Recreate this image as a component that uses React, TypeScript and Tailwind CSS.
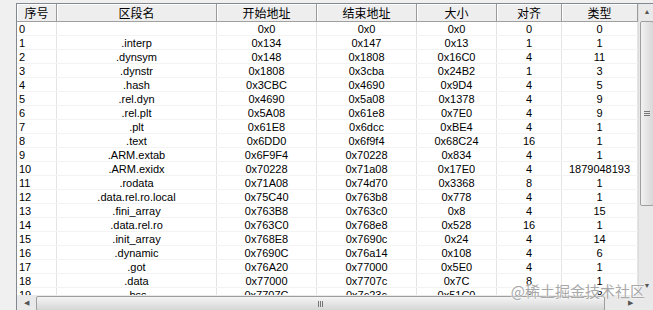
const cols = [
  { title: "序号", w: "w-[40px]", align: "text-left pl-[2px]" },
  { title: "区段名", w: "w-[160px]", align: "text-center" },
  { title: "开始地址", w: "w-[100px]", align: "text-center" },
  { title: "结束地址", w: "w-[100px]", align: "text-center" },
  { title: "大小", w: "w-[80px]", align: "text-center" },
  { title: "对齐", w: "w-[65px]", align: "text-center" },
  { title: "类型", w: "w-[76px]", align: "text-center" },
];

const rows = [
  ["0", "", "0x0", "0x0", "0x0", "0", "0"],
  ["1", ".interp", "0x134", "0x147", "0x13", "1", "1"],
  ["2", ".dynsym", "0x148", "0x1808", "0x16C0", "4", "11"],
  ["3", ".dynstr", "0x1808", "0x3cba", "0x24B2", "1", "3"],
  ["4", ".hash", "0x3CBC", "0x4690", "0x9D4", "4", "5"],
  ["5", ".rel.dyn", "0x4690", "0x5a08", "0x1378", "4", "9"],
  ["6", ".rel.plt", "0x5A08", "0x61e8", "0x7E0", "4", "9"],
  ["7", ".plt", "0x61E8", "0x6dcc", "0xBE4", "4", "1"],
  ["8", ".text", "0x6DD0", "0x6f9f4", "0x68C24", "16", "1"],
  ["9", ".ARM.extab", "0x6F9F4", "0x70228", "0x834", "4", "1"],
  ["10", ".ARM.exidx", "0x70228", "0x71a08", "0x17E0", "4", "1879048193"],
  ["11", ".rodata", "0x71A08", "0x74d70", "0x3368", "8", "1"],
  ["12", ".data.rel.ro.local", "0x75C40", "0x763b8", "0x778", "4", "1"],
  ["13", ".fini_array", "0x763B8", "0x763c0", "0x8", "4", "15"],
  ["14", ".data.rel.ro", "0x763C0", "0x768e8", "0x528", "16", "1"],
  ["15", ".init_array", "0x768E8", "0x7690c", "0x24", "4", "14"],
  ["16", ".dynamic", "0x7690C", "0x76a14", "0x108", "4", "6"],
  ["17", ".got", "0x76A20", "0x77000", "0x5E0", "4", "1"],
  ["18", ".data", "0x77000", "0x7707c", "0x7C", "8", "1"],
  ["19", ".bss", "0x7707C", "0x7c23c", "0x51C0", "8", "8"],
];

export default function App() {
  return (
    <div className="relative w-[653px] h-[310px] overflow-hidden bg-[#f0f0f0] pt-[3px] pl-[16px] font-['Liberation_Sans',sans-serif] text-[11px] text-black">
      {/* list view */}
      <div className="flex w-[640px] h-[292px] border-l border-t border-[#828790] bg-white">
        <div className="flex flex-col w-[621px] overflow-hidden">
          {/* header */}
          <div className="flex h-[18px] shrink-0 bg-[#eeeeee] border-b border-[#a0a0a0]">
            {cols.map((c) => (
              <div
                key={c.title}
                className={`${c.w} shrink-0 flex items-center justify-center border-r border-[#9a9a9a] shadow-[inset_1px_1px_0_#ffffff] font-['Noto_Sans_CJK_SC',sans-serif] text-[12px] leading-[16px]`}
              >
                {c.title}
              </div>
            ))}
          </div>

          {/* rows */}
          {rows.map((r) => (
            <div key={r[0]} className="flex h-[14px] shrink-0 border-b border-[#f3f3f3]">
              {r.map((v, i) => (
                <div
                  key={i}
                  className={`${cols[i].w} ${cols[i].align} shrink-0 leading-[15px] whitespace-nowrap overflow-hidden border-r border-[#e4e4e4]`}
                >
                  {v}
                </div>
              ))}
            </div>
          ))}
        </div>

        {/* vertical scrollbar */}
        <div className="flex flex-col w-[17px] shrink-0 bg-[#e9e9e9] border-l border-[#dcdcdc]">
          <div className="h-[17px] flex items-center justify-center text-[7px] text-[#555]">▲</div>
          <div className="mx-[1px] h-[185px] rounded-[2px] border border-[#9e9e9e] bg-gradient-to-r from-[#f2f2f2] to-[#d8d8d8] flex items-center justify-center">
            <div className="flex flex-col gap-[1px]">
              <div className="w-[6px] h-[1px] bg-[#777]" />
              <div className="w-[6px] h-[1px] bg-[#777]" />
              <div className="w-[6px] h-[1px] bg-[#777]" />
            </div>
          </div>
          <div className="flex-1" />
          <div className="h-[17px] flex items-center justify-center text-[7px] text-[#555]">▼</div>
        </div>
      </div>

      {/* horizontal scrollbar */}
      <div className="flex w-[640px] h-[17px] bg-[#e9e9e9] border-l border-[#828790]">
        <div className="w-[19px] flex items-center justify-center text-[7px] text-[#555]">◀</div>
        <div className="w-[569px] my-[1px] rounded-[2px] border border-[#9e9e9e] bg-gradient-to-b from-[#f4f4f4] to-[#d6d6d6] flex items-center justify-center">
          <div className="flex gap-[1px]">
            <div className="w-[1px] h-[6px] bg-[#777]" />
            <div className="w-[1px] h-[6px] bg-[#777]" />
            <div className="w-[1px] h-[6px] bg-[#777]" />
          </div>
        </div>
        <div className="flex-1" />
        <div className="w-[17px] flex items-center justify-center text-[7px] text-[#555]">▶</div>
        <div className="w-[17px]" />
      </div>

      {/* watermark */}
      <div className="absolute right-[8px] bottom-[12px] font-['Noto_Sans_CJK_SC',sans-serif] text-[15px] leading-none text-[#a8a8a8] [text-shadow:0_0_2px_#fff,0_0_1px_#fff]">
        @稀土掘金技术社区
      </div>
    </div>
  );
}
